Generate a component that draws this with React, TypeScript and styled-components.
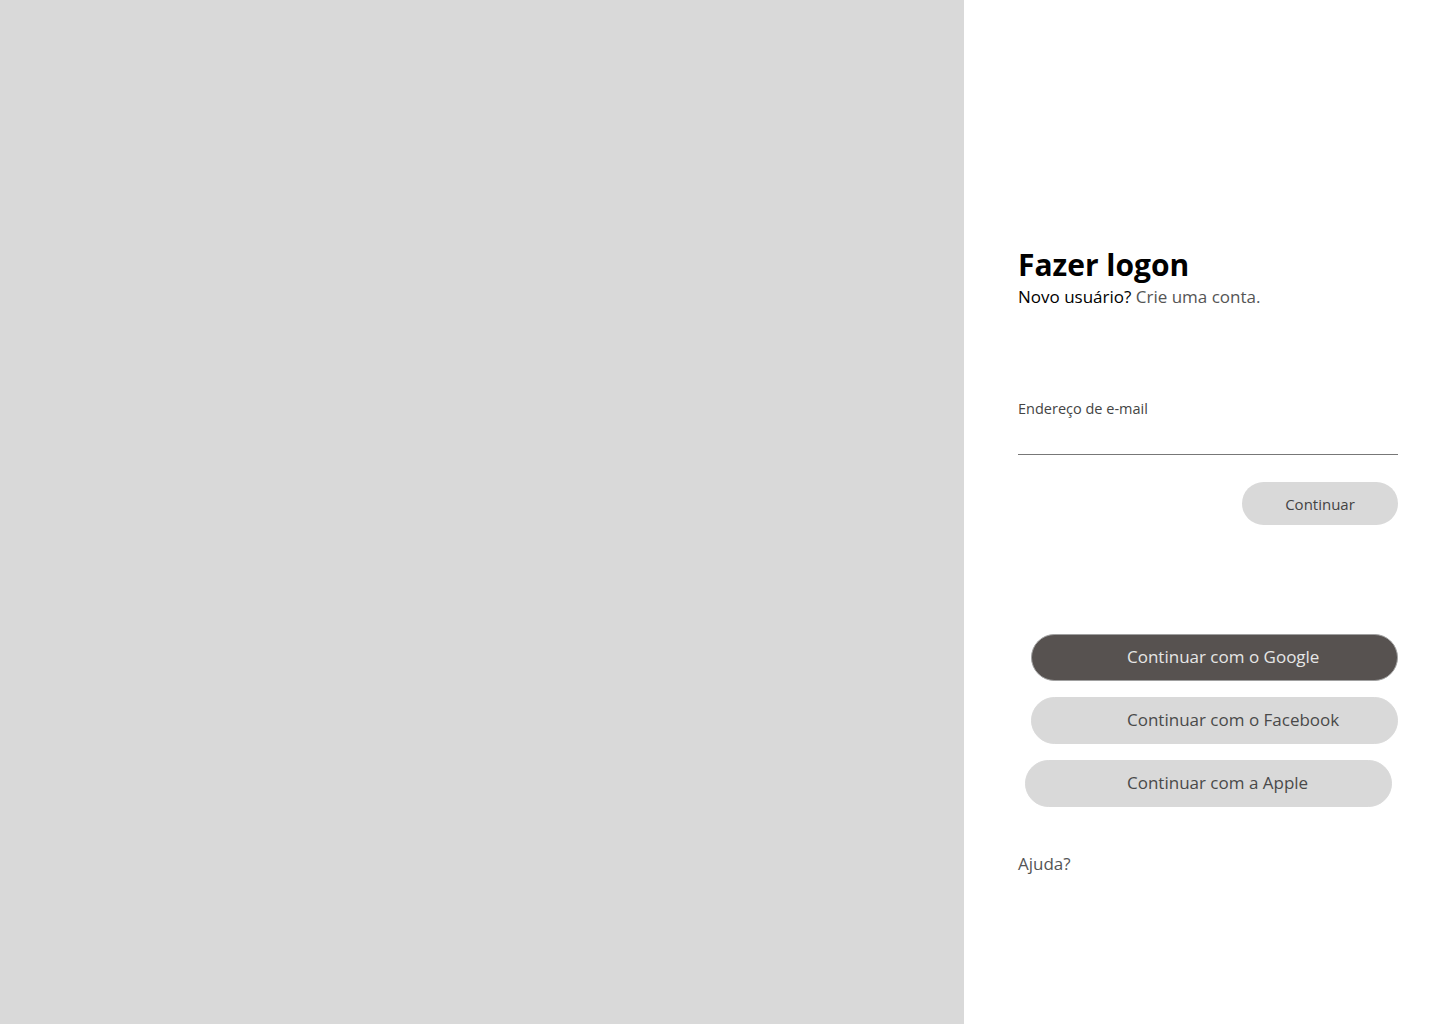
import React from "react";
import styled, { createGlobalStyle } from "styled-components";

const Global = createGlobalStyle`
  html, body { margin: 0; padding: 0; }
  body { font-family: "Open Sans", "Noto Sans", sans-serif; background: #fff; }
  * { box-sizing: border-box; }
`;

const Page = styled.div`
  display: grid;
  grid-template-columns: 964px 476px;
  width: 1440px;
  height: 1024px;
`;

const ImagePanel = styled.div`
  background: #d9d9d9;
`;

const FormPanel = styled.div`
  background: #fff;
  padding: 245px 42px 0 54px;
  display: flex;
  flex-direction: column;
`;

const Title = styled.h1`
  margin: 0;
  font-size: 30px;
  line-height: 40px;
  font-weight: 700;
  color: #000;
`;

const Subtitle = styled.p`
  margin: 0;
  font-size: 17px;
  line-height: 24px;
  color: #000;
`;

const Link = styled.a`
  color: #555;
  text-decoration: none;
`;

const Field = styled.label`
  margin-top: 90px;
  display: flex;
  flex-direction: column;
`;

const Label = styled.span`
  font-size: 14.5px;
  line-height: 20px;
  color: #444;
`;

const Input = styled.input`
  border: none;
  border-bottom: 1px solid #777;
  height: 36px;
  font: inherit;
  outline: none;
  background: transparent;
`;

const Actions = styled.div`
  display: flex;
  justify-content: flex-end;
  margin-top: 27px;
`;

const SmallButton = styled.button`
  width: 156px;
  height: 43px;
  border: none;
  border-radius: 22px;
  background: #d9d9d9;
  color: #444;
  font-family: inherit;
  font-size: 15px;
  cursor: pointer;
`;

const Social = styled.div`
  margin-top: 109px;
  display: flex;
  flex-direction: column;
  gap: 16px;
`;

const SocialButton = styled.button<{ $dark?: boolean; $shift?: number }>`
  width: 367px;
  height: 47px;
  margin-left: ${(p) => 13 + (p.$shift ?? 0)}px;
  border-radius: 24px;
  border: 1px solid ${(p) => (p.$dark ? "#a0a0a0" : "#d9d9d9")};
  background: ${(p) => (p.$dark ? "#575250" : "#d9d9d9")};
  color: ${(p) => (p.$dark ? "#e6e6e6" : "#4a4a4a")};
  font-family: inherit;
  font-size: 17px;
  font-weight: 500;
  text-align: left;
  padding: 0 0 2px ${(p) => 95 - (p.$shift ?? 0)}px;
  cursor: pointer;
`;

const Help = styled.a`
  margin-top: 45px;
  font-size: 17px;
  line-height: 24px;
  color: #555;
  text-decoration: none;
`;

export default function App() {
  return (
    <>
      <Global />
      <Page>
        <ImagePanel />
        <FormPanel>
          <Title>Fazer logon</Title>
          <Subtitle>
            Novo usuário? <Link href="#">Crie uma conta.</Link>
          </Subtitle>
          <Field>
            <Label>Endereço de e-mail</Label>
            <Input type="email" />
          </Field>
          <Actions>
            <SmallButton>Continuar</SmallButton>
          </Actions>
          <Social>
            <SocialButton $dark>Continuar com o Google</SocialButton>
            <SocialButton>Continuar com o Facebook</SocialButton>
            <SocialButton $shift={-6}>Continuar com a Apple</SocialButton>
          </Social>
          <Help href="#">Ajuda?</Help>
        </FormPanel>
      </Page>
    </>
  );
}
